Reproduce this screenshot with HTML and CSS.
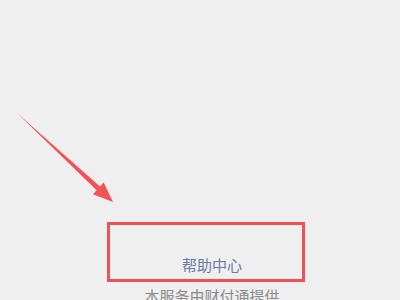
FILE: index.html
```html
<!DOCTYPE html>
<html lang="zh-CN">
<head>
  <meta charset="UTF-8" />
  <title>帮助中心</title>
  <link rel="stylesheet" href="styles.css">
</head>
<body>
  <div class="page">
    <div class="footer">
      <a class="help" href="#">帮助中心</a>
      <p class="provider">本服务由财付通提供</p>
    </div>
  </div>

  <!-- annotation overlay -->
  <div class="mark-box"></div>
  <svg class="mark-arrow" width="400" height="300" viewBox="0 0 400 300">
    <polygon fill="#f0545a" points="17,113 100,186.6 103.7,182.5 113,202 92.9,194.3 96.6,190.2" />
  </svg>
</body>
</html>
```

FILE: styles.css
```css
* {
  margin: 0;
  padding: 0;
  box-sizing: border-box;
}
body {
  font-family: "Noto Sans CJK SC", "Noto Sans", sans-serif;
  background: #efefef;
  width: 400px;
  height: 300px;
  overflow: hidden;
  position: relative;
}
.page {
  padding-top: 255px;
}
.footer {
  padding-left: 24px;
  text-align: center;
}
.help {
  display: block;
  font-size: 15px;
  line-height: 20px;
  color: #6b7aa6;
  text-decoration: none;
}
.provider {
  margin-top: 11px;
  font-size: 15px;
  line-height: 20px;
  color: #8a8a8a;
}
.mark-box {
  position: absolute;
  left: 107px;
  top: 222px;
  width: 198px;
  height: 60px;
  border: 3px solid #ec5258;
}
.mark-arrow {
  position: absolute;
  left: 0;
  top: 0;
}
```
